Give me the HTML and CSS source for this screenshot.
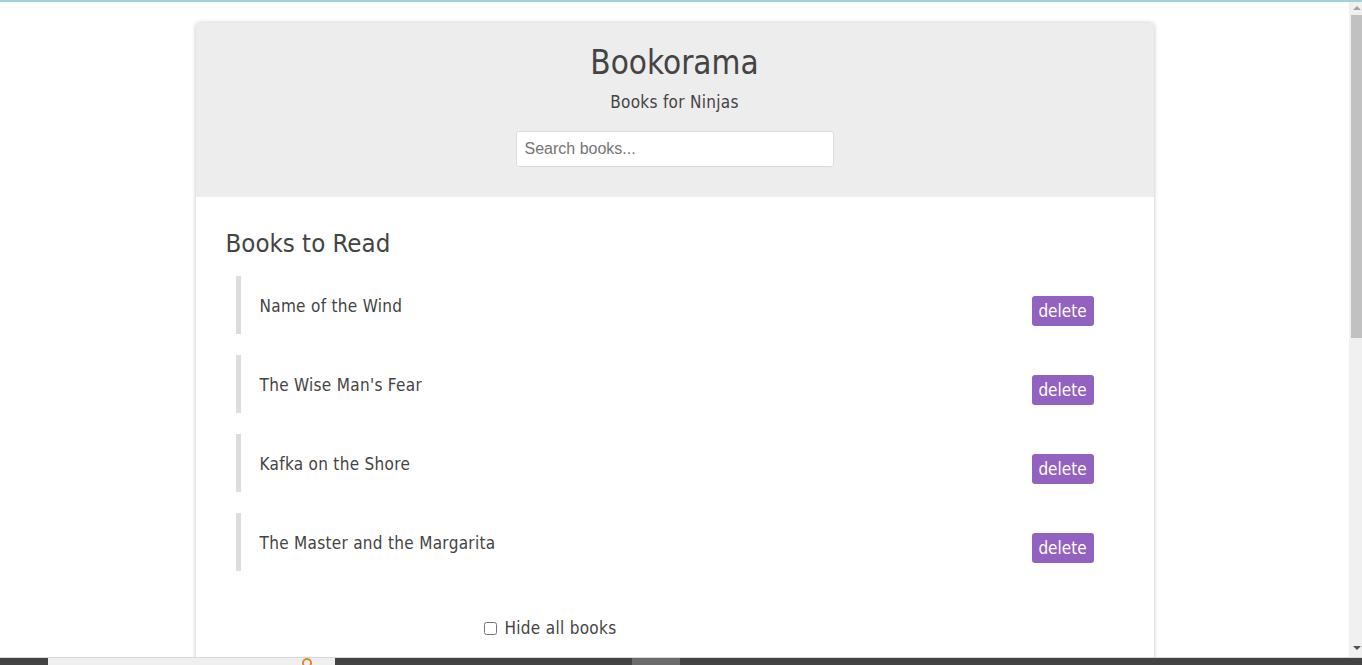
FILE: index.html
```html
<!DOCTYPE html>
<html lang="en">
<head>
<meta charset="utf-8">
<title>Bookorama</title>
<link rel="stylesheet" href="styles.css">
</head>
<body>
<div class="topline"></div>
<div class="frame">
  <div class="viewport">
    <div class="card">
      <header class="card-head">
        <h1 class="title">Bookorama</h1>
        <p class="subtitle">Books for Ninjas</p>
        <input class="search" type="text" placeholder="Search books...">
      </header>
      <section class="card-body">
        <h2 class="section-title">Books to Read</h2>
        <ul class="book-list">
          <li class="book"><span class="book-name">Name of the Wind</span><button class="delete">delete</button></li>
          <li class="book"><span class="book-name">The Wise Man's Fear</span><button class="delete">delete</button></li>
          <li class="book"><span class="book-name">Kafka on the Shore</span><button class="delete">delete</button></li>
          <li class="book"><span class="book-name">The Master and the Margarita</span><button class="delete">delete</button></li>
        </ul>
        <label class="hide-row"><input class="hide-check" type="checkbox"><span>Hide all books</span></label>
      </section>
    </div>
  </div>
  <div class="scrollbar">
    <div class="arrow up"></div>
    <div class="thumb"></div>
    <div class="track-rest"></div>
    <div class="arrow down"></div>
  </div>
</div>
<div class="taskbar">
  <div class="tb-dark tb-a"></div>
  <div class="tb-light"><span class="tb-icon"></span></div>
  <div class="tb-dark tb-b"></div>
  <div class="tb-mid"></div>
  <div class="tb-dark tb-c"></div>
</div>
</body>
</html>
```
FILE: styles.css
```css
html, body {
  margin: 0;
  padding: 0;
  height: 665px;
  overflow: hidden;
  background: #fff;
}
body {
  display: flex;
  flex-direction: column;
  font-family: "DejaVu Sans Condensed", "DejaVu Sans", sans-serif;
  color: #444;
}
.topline {
  height: 2px;
  background: #a3d0d6;
  flex: none;
}
.frame {
  flex: 1;
  display: flex;
  min-height: 0;
}
.viewport {
  flex: 1;
  overflow: hidden;
  padding-top: 21px;
}
.card {
  width: 958px;
  margin: 0 auto;
  background: #fff;
  border-radius: 4px;
  box-shadow: 0 0 4px rgba(0, 0, 0, 0.25);
  overflow: hidden;
}
.card-head {
  background: #ededed;
  padding: 20px 0 30px;
  display: flex;
  flex-direction: column;
  align-items: center;
}
.title {
  margin: 0;
  font-size: 33px;
  line-height: 40px;
  font-weight: normal;
  color: #444;
}
.subtitle {
  margin: 9px 0 0;
  font-size: 17px;
  line-height: 20px;
  letter-spacing: 0.3px;
}
.search {
  margin-top: 19px;
  width: 318px;
  height: 36px;
  box-sizing: border-box;
  border: 1px solid #dcdcdc;
  border-radius: 3px;
  padding: 0 8px;
  font-family: "Liberation Sans", Arial, sans-serif;
  font-size: 16px;
  color: #444;
  background: #fff;
  outline: none;
}
.search::placeholder {
  color: #757575;
}
.card-body {
  padding: 31px 30px 60px;
}
.section-title {
  margin: 0;
  font-size: 25.6px;
  line-height: 30px;
  font-weight: normal;
  color: #444;
}
.book-list {
  list-style: none;
  margin: 18px 0 0 10px;
  padding: 0;
}
.book {
  display: flex;
  justify-content: space-between;
  align-items: flex-start;
  height: 58px;
  box-sizing: border-box;
  border-left: 5px solid #ddd;
  padding: 20px 30px 0 19px;
  margin-bottom: 21px;
}
.book-name {
  font-size: 17px;
  line-height: 22px;
  margin-top: -1px;
  letter-spacing: 0.3px;
}
.delete {
  margin-top: 0;
  width: 62px;
  height: 30px;
  border: none;
  border-radius: 3px;
  background: #9361bf;
  color: #fff;
  font-family: "DejaVu Sans Condensed", "DejaVu Sans", sans-serif;
  font-size: 17px;
  padding: 0;
  cursor: pointer;
}
.hide-row {
  display: flex;
  align-items: center;
  margin: 47px 0 0 258px;
  font-size: 17px;
  line-height: 20px;
  letter-spacing: 0.3px;
}
.hide-check {
  margin: 0 8px 0 0;
  width: 13px;
  height: 13px;
}
.scrollbar {
  flex: none;
  width: 13px;
  background: #f0f0f0;
  display: flex;
  flex-direction: column;
  align-items: flex-end;
}
.arrow {
  width: 0;
  height: 0;
  border-left: 4px solid transparent;
  border-right: 4px solid transparent;
  margin-right: 1px;
}
.arrow.up {
  border-bottom: 4px solid #a3a3a3;
  margin-top: 4px;
  margin-bottom: 5px;
}
.arrow.down {
  border-top: 4px solid #505050;
  margin-bottom: 7px;
}
.thumb {
  width: 11px;
  height: 323px;
  background: #c1c1c1;
}
.track-rest {
  flex: 1;
}
.taskbar {
  flex: none;
  height: 7px;
  display: flex;
  background: #434343;
  border-top: 1px solid #d8d8d8;
}
.tb-a { width: 48px; }
.tb-light {
  width: 287px;
  background: #efefef;
  position: relative;
}
.tb-icon {
  position: absolute;
  left: 254px;
  top: 0;
  width: 10px;
  height: 10px;
  border: 2px solid #d98a2a;
  border-radius: 50%;
  box-sizing: border-box;
}
.tb-b { width: 297px; }
.tb-mid { width: 48px; background: #6b6b6b; }
.tb-c { flex: 1; }
```
